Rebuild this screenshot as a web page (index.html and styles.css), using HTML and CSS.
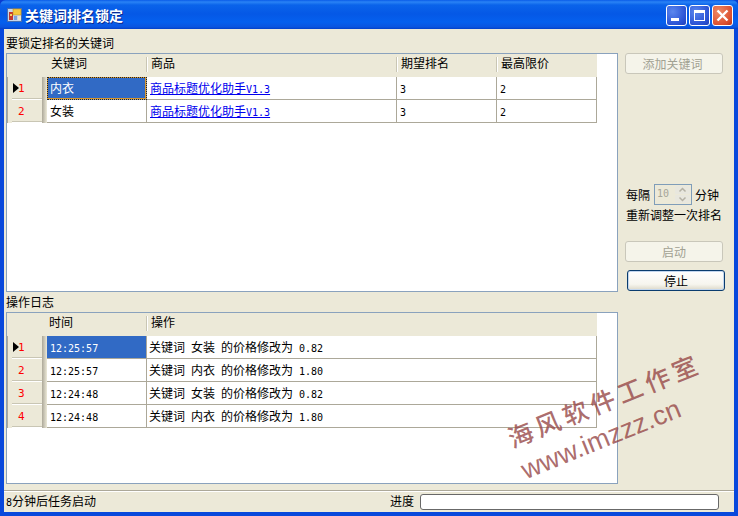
FILE: index.html
```html
<!DOCTYPE html>
<html lang="zh">
<head>
<meta charset="utf-8">
<title>关键词排名锁定</title>
<link rel="stylesheet" href="styles.css">
</head>
<body>
<div class="window">
  <header class="titlebar">
    <svg class="appicon" width="16" height="16" viewBox="0 0 16 16">
      <rect x="0.500" y="1.500" width="14" height="13" fill="#c9d6ea" stroke="#4a6fae"/>
      <rect x="2" y="5" width="4" height="8" fill="#c4372c"/>
      <rect x="3" y="7" width="2" height="2" fill="#f5d860"/>
      <rect x="6" y="2" width="8" height="6" fill="#f5c93f" stroke="#b98a20" stroke-width="0.500"/>
      <rect x="7" y="9" width="3" height="4" fill="#7fa3da"/>
      <rect x="11" y="9" width="3" height="4" fill="#f0e8c8"/>
    </svg>
    <span class="title">关键词排名锁定</span>
    <div class="winbtns">
      <div class="winbtn"><svg width="21" height="21" viewBox="0 0 21 21"><rect x="5" y="13" width="8" height="3" fill="#fff"/></svg></div>
      <div class="winbtn"><svg width="21" height="21" viewBox="0 0 21 21"><path d="M5 5h11v11H5z M6 8v7h9V8z" fill="#fff" fill-rule="evenodd"/></svg></div>
      <div class="winbtn close"><svg width="21" height="21" viewBox="0 0 21 21"><path d="M5.500 5.500l10 10M15.500 5.500l-10 10" stroke="#fff" stroke-width="2.400" fill="none"/></svg></div>
    </div>
  </header>

  <div class="client">
    <main class="content">
      <div class="left">
        <div class="label first">要锁定排名的关键词</div>
        <section class="grid grid-top">
          <div class="row head kw">
            <div class="rh"></div><div class="c1">关键词</div><div class="c2">商品</div><div class="c3">期望排名</div><div class="c4">最高限价</div>
          </div>
          <div class="row kw">
            <div class="rh"><span class="arrow"></span><span class="num">1</span></div><div class="c1 sel focus">内衣</div><div class="c2"><a href="#">商品标题优化助手<span class="mono">V1.3</span></a></div><div class="c3"><span class="mono">3</span></div><div class="c4"><span class="mono">2</span></div>
          </div>
          <div class="row kw">
            <div class="rh"><span class="num">2</span></div><div class="c1">女装</div><div class="c2"><a href="#">商品标题优化助手<span class="mono">V1.3</span></a></div><div class="c3"><span class="mono">3</span></div><div class="c4"><span class="mono">2</span></div>
          </div>
        </section>

        <div class="label second">操作日志</div>
        <section class="grid grid-log">
          <div class="row head log">
            <div class="rh"></div><div class="c1">时间</div><div class="c2">操作</div>
          </div>
          <div class="row log">
            <div class="rh"><span class="arrow"></span><span class="num">1</span></div><div class="c1 sel"><span class="mono">12:25:57</span></div><div class="c2 msg">关键词 女装 的价格修改为 <span class="mono">0.82</span></div>
          </div>
          <div class="row log">
            <div class="rh"><span class="num">2</span></div><div class="c1"><span class="mono">12:25:57</span></div><div class="c2 msg">关键词 内衣 的价格修改为 <span class="mono">1.80</span></div>
          </div>
          <div class="row log">
            <div class="rh"><span class="num">3</span></div><div class="c1"><span class="mono">12:24:48</span></div><div class="c2 msg">关键词 女装 的价格修改为 <span class="mono">0.82</span></div>
          </div>
          <div class="row log">
            <div class="rh"><span class="num">4</span></div><div class="c1"><span class="mono">12:24:48</span></div><div class="c2 msg">关键词 内衣 的价格修改为 <span class="mono">1.80</span></div>
          </div>
        </section>
      </div>

      <aside class="side">
        <button class="btn disabled add" disabled>添加关键词</button>
        <div class="interval">
          <span>每隔</span>
          <div class="spin">
            <span class="spinval">10</span>
            <div class="spinbtns">
              <div class="spinbtn"><svg width="13" height="8" viewBox="0 0 13 8"><path d="M3.500 5.500L6.500 2.500L9.500 5.500" stroke="#b5b2a5" stroke-width="1.500" fill="none"/></svg></div>
              <div class="spinbtn"><svg width="13" height="8" viewBox="0 0 13 8"><path d="M3.500 2.500L6.500 5.500L9.500 2.500" stroke="#b5b2a5" stroke-width="1.500" fill="none"/></svg></div>
            </div>
          </div>
          <span>分钟</span>
        </div>
        <div class="again">重新调整一次排名</div>
        <button class="btn disabled start" disabled>启动</button>
        <button class="btn stop">停止</button>
      </aside>
    </main>

    <footer class="status">
      <span class="status-msg"><span class="mono">8</span>分钟后任务启动</span>
      <span class="status-label">进度</span>
      <div class="progress"></div>
    </footer>

    <div class="watermark">
      <div class="wm1">海风软件工作室</div>
      <div class="wm2">www.imzzz.cn</div>
    </div>
  </div>
</div>
</body>
</html>
```
FILE: styles.css
```css
* { box-sizing: border-box; }
html, body { margin: 0; padding: 0; }
body {
  width: 738px;
  height: 516px;
  overflow: hidden;
  background: #0a3bd0;
  font-family: "Noto Sans CJK SC", "Liberation Sans", sans-serif;
  font-size: 12px;
  color: #000;
}
.window {
  width: 738px;
  height: 516px;
  display: flex;
  flex-direction: column;
  background: #0848dc;
  border-radius: 6px 6px 0 0;
  overflow: hidden;
}
.titlebar {
  height: 29px;
  flex: none;
  display: flex;
  align-items: center;
  padding: 0 5px 0 7px;
  background: linear-gradient(#0a5ce8 0, #2a83f5 2px, #0a63ea 5px, #0558e6 14px, #0560ee 22px, #0a55e0 27px, #0340c8 29px);
}
.appicon { flex: none; margin-right: 2px; }
.title {
  flex: 1;
  color: #fff;
  font-size: 14px;
  font-weight: 700;
  text-shadow: 1px 1px 0 #0a2a90;
}
.winbtns { display: flex; gap: 2px; margin-top: 2px; }
.winbtn {
  width: 21px;
  height: 21px;
  border: 1px solid #fff;
  border-radius: 3px;
  background: radial-gradient(circle at 30% 30%, #5a86ee, #2a52d4 70%, #2040b8);
  display: flex;
  align-items: center;
  justify-content: center;
}
.winbtn svg { flex: none; margin: -1px; }
.winbtn.close { background: radial-gradient(circle at 30% 30%, #ee8a66, #dc5030 70%, #b83418); }
.client {
  position: relative;
  height: 483px;
  flex: none;
  margin: 0 4px 4px 4px;
  width: 730px;
  background: #ece9d8;
  display: flex;
  flex-direction: column;
}
.content { flex: 1; display: flex; min-height: 0; }
.left { width: 614px; padding-left: 2px; flex: none; }
.label { height: 17px; line-height: 14px; white-space: nowrap; }
.label.first { margin-top: 7px; }
.label.second { height: 20px; line-height: 17px; padding-top: 1px; }
.grid {
  width: 612px;
  background: #fff;
  border: 1px solid #8aa2bd;
}
.grid-top { height: 239px; }
.grid-log { height: 172px; }
.row { display: flex; height: 23px; }
.row > div { flex: none; white-space: nowrap; }
.rh {
  width: 40px;
  background: linear-gradient(90deg, #aca899 0 1px, #ece9d8 1px 35px, #aca899 35px, #ece9d8 40px);
  display: flex;
  align-items: center;
  padding-left: 11px;
  position: relative;
}
.rh::after {
  content: "";
  position: absolute;
  left: 5px;
  right: 5px;
  bottom: 0;
  height: 2px;
  background: linear-gradient(#c9c6b4 50%, #fff 50%);
}
.head .rh { background: #ece9d8; }
.head .rh::after { display: none; }
.c1 { width: 100px; }
.c2 { width: 250px; }
.c3, .c4 { width: 100px; }
.row:not(.head) > div:not(.rh) {
  border-right: 1px solid #aca899;
  border-bottom: 1px solid #aca899;
  line-height: 22px;
  padding-left: 3px;
}
.row.log .c1 { width: 100px; padding-left: 2px; }
.row.log .c2 { width: 450px; }
.head > div {
  background: #ece9d8;
  line-height: 18px;
  padding-left: 4px;
  position: relative;
}
.head > .c2::before,
.head > .c3::before,
.head > .c4::before {
  content: "";
  position: absolute;
  left: -1px;
  top: 3px;
  height: 15px;
  width: 2px;
  background: linear-gradient(90deg, #c9c6b4 50%, #fff 50%);
}
.sel { background: #316ac5; color: #fff; }
.focus {
  outline: 1px dotted #222;
  outline-offset: -1px;
  box-shadow: inset 0 0 0 1px #d9962c;
}
a { color: #00e; text-decoration: underline; }
.mono { font-family: "DejaVu Sans Mono", monospace; font-size: 10px; }
.msg { word-spacing: 3.300px; padding-left: 2px !important; }
.num { color: #f00; font-family: "DejaVu Sans Mono", monospace; font-size: 11px; }
.arrow {
  position: absolute;
  left: 6px;
  top: 6px;
  width: 0;
  height: 0;
  border-left: 6px solid #000;
  border-top: 5px solid transparent;
  border-bottom: 5px solid transparent;
}

.side {
  flex: 1;
  position: relative;
  display: flex;
  flex-direction: column;
  padding: 24px 0 0 7px;
}
.btn {
  width: 98px;
  height: 21px;
  padding: 0;
  background: #f5f4ea;
  border: 1px solid #c9c7ba;
  border-radius: 3px;
  font: inherit;
  color: #000;
}
.btn.disabled { color: #a1a192; }
.add { padding-right: 3px; }
.interval {
  margin-top: 110px;
  margin-left: 1px;
  height: 21px;
  display: flex;
  align-items: center;
  gap: 3px;
  white-space: nowrap;
}
.spin {
  width: 38px;
  height: 21px;
  margin-left: 1px;
  border: 1px solid #7f9db9;
  background: #ece9d8;
  display: flex;
  padding: 1px;
}
.spinval {
  flex: 1;
  color: #a5a598;
  font-family: "DejaVu Sans Mono", monospace;
  font-size: 10px;
  line-height: 15px;
  padding-left: 1px;
}
.spinbtns { width: 15px; display: flex; flex-direction: column; gap: 1px; }
.spinbtn {
  flex: 1;
  background: #e8e7de;
  border-radius: 1px;
  display: flex;
  align-items: center;
  justify-content: center;
}
.again { margin: 1px 0 0 1px; line-height: 17px; height: 17px; white-space: nowrap; }
.start { margin-top: 18px; }
.stop {
  margin-top: 8px;
  margin-left: 2px;
  height: 21px;
  background: linear-gradient(#fff, #f6f5ee 70%, #dcd8c8);
  border: 1px solid #0a3c6e;
  box-shadow: inset 0 0 0 1px #c2d6ee;
}

.status {
  height: 22px;
  flex: none;
  margin-top: 6px;
  border-top: 1px solid #aca899;
  box-shadow: inset 0 1px 0 #fff;
  display: flex;
  align-items: center;
  padding: 0 15px 0 2px;
}
.status-msg { flex: 1; white-space: nowrap; margin-bottom: 2px; }
.status-label { margin-right: 6px; margin-bottom: 2px; }
.progress {
  width: 299px;
  height: 16px;
  background: #fff;
  border: 1px solid #686868;
  border-radius: 3px;
}

.watermark {
  position: absolute;
  left: 490px;
  top: 340px;
  width: 240px;
  height: 150px;
  pointer-events: none;
  color: rgba(150, 70, 70, 0.8);
}
.wm1, .wm2 {
  position: absolute;
  white-space: nowrap;
  transform-origin: 0 100%;
  transform: rotate(-22deg);
}
.wm1 {
  left: 20px;
  top: 53px;
  font-size: 25px;
  font-weight: 500;
  line-height: 30px;
  letter-spacing: 4.500px;
}
.wm2 {
  left: 34px;
  top: 86px;
  font-family: "Liberation Sans", sans-serif;
  font-size: 27px;
  line-height: 30px;
}
```
